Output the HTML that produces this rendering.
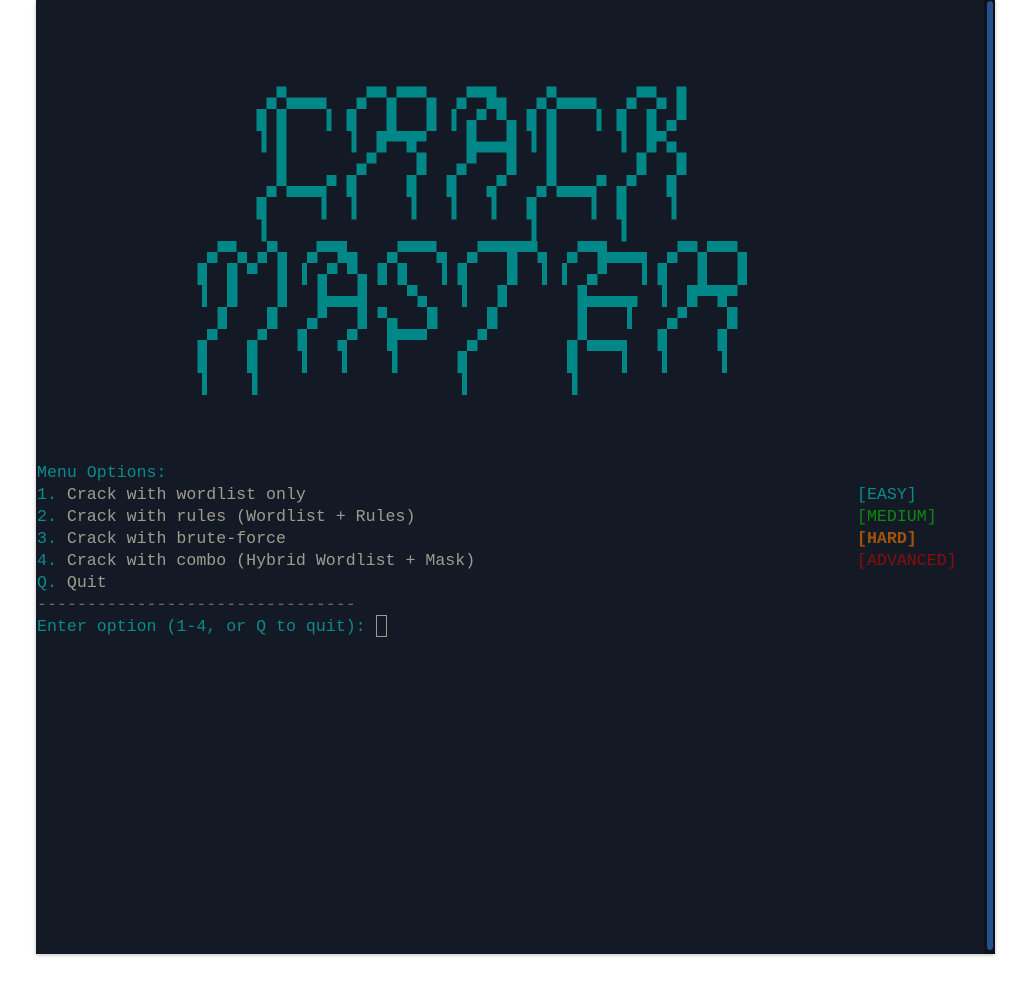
<!DOCTYPE html>
<html><head><meta charset="utf-8">
<style>
html,body{margin:0;padding:0;background:#fff;width:1032px;height:990px;overflow:hidden}
#term{position:absolute;left:36px;top:0;width:959px;height:954px;background:#131a25;box-shadow:0 1px 4px rgba(0,0,0,.25)}
#sbtrack{position:absolute;left:984px;top:0;width:11px;height:954px;background:#0e131b}
#sb{position:absolute;left:987px;top:1px;width:6px;height:949px;background:#24508c;border-radius:3px}
svg{position:absolute;overflow:visible}
svg rect{fill:#008787}
.t{position:absolute;left:37px;font-family:"Liberation Mono","DejaVu Sans Mono",monospace;font-size:16.6px;line-height:22px;white-space:pre;color:#9c9c8e}
.c{color:#0b8a8a}
.tag{position:absolute;left:857px;font-family:"Liberation Mono",monospace;font-size:16.6px;line-height:22px;white-space:pre}
#cur{position:absolute;left:376px;top:615px;width:11px;height:22px;border:1px solid #9c9c8e;box-sizing:border-box}
</style></head><body>
<div id="term"></div>
<div id="sbtrack"></div>
<div id="sb"></div>

<svg style="left:250px;top:80px" width="450" height="170" viewBox="0 0 1350 510" preserveAspectRatio="none" shape-rendering="crispEdges">
<rect x="80" y="20" width="30" height="33"/><rect x="50" y="53" width="30" height="34"/><rect x="110" y="53" width="120" height="34"/>
<rect x="20" y="87" width="30" height="66"/><rect x="35" y="153" width="15" height="65"/><rect x="80" y="87" width="30" height="231"/>
<rect x="230" y="87" width="15" height="66"/><rect x="230" y="285" width="30" height="33"/><rect x="50" y="318" width="30" height="33"/>
<rect x="110" y="318" width="120" height="33"/><rect x="20" y="351" width="30" height="67"/><rect x="35" y="418" width="15" height="67"/>
<rect x="215" y="351" width="15" height="67"/>
<rect x="350" y="20" width="60" height="33"/><rect x="440" y="20" width="90" height="33"/><rect x="320" y="53" width="30" height="34"/>
<rect x="410" y="53" width="30" height="100"/><rect x="530" y="53" width="30" height="100"/><rect x="290" y="87" width="30" height="66"/>
<rect x="305" y="153" width="15" height="65"/><rect x="380" y="153" width="150" height="32"/><rect x="380" y="185" width="30" height="33"/>
<rect x="470" y="185" width="30" height="33"/><rect x="350" y="218" width="30" height="33"/><rect x="500" y="218" width="30" height="67"/>
<rect x="320" y="251" width="30" height="34"/><rect x="290" y="285" width="30" height="66"/><rect x="305" y="351" width="15" height="67"/>
<rect x="470" y="285" width="30" height="66"/><rect x="485" y="351" width="15" height="67"/>
<rect x="650" y="20" width="90" height="33"/><rect x="620" y="53" width="30" height="34"/><rect x="710" y="53" width="60" height="34"/>
<rect x="605" y="87" width="15" height="66"/><rect x="680" y="87" width="30" height="33"/><rect x="740" y="87" width="30" height="33"/>
<rect x="650" y="120" width="30" height="131"/><rect x="770" y="120" width="30" height="165"/><rect x="680" y="185" width="90" height="33"/>
<rect x="620" y="251" width="30" height="34"/><rect x="590" y="285" width="30" height="66"/><rect x="605" y="351" width="15" height="67"/>
<rect x="740" y="285" width="30" height="33"/><rect x="710" y="318" width="30" height="33"/><rect x="725" y="351" width="15" height="67"/>
<rect x="890" y="20" width="30" height="33"/><rect x="860" y="53" width="30" height="34"/><rect x="920" y="53" width="120" height="34"/>
<rect x="830" y="87" width="30" height="66"/><rect x="845" y="153" width="15" height="65"/><rect x="890" y="87" width="30" height="231"/>
<rect x="1040" y="87" width="15" height="66"/><rect x="1040" y="285" width="30" height="33"/><rect x="860" y="318" width="30" height="33"/>
<rect x="920" y="318" width="120" height="33"/><rect x="830" y="351" width="30" height="67"/><rect x="845" y="418" width="15" height="67"/>
<rect x="1025" y="351" width="15" height="67"/>
<rect x="1160" y="20" width="60" height="33"/><rect x="1280" y="20" width="30" height="100"/><rect x="1130" y="53" width="30" height="34"/>
<rect x="1220" y="53" width="30" height="34"/><rect x="1100" y="87" width="30" height="66"/><rect x="1115" y="153" width="15" height="65"/>
<rect x="1190" y="87" width="30" height="131"/><rect x="1250" y="120" width="30" height="33"/><rect x="1220" y="153" width="30" height="32"/>
<rect x="1250" y="185" width="30" height="33"/><rect x="1280" y="218" width="30" height="67"/><rect x="1160" y="218" width="30" height="67"/>
<rect x="1130" y="285" width="30" height="33"/><rect x="1100" y="318" width="30" height="100"/><rect x="1115" y="418" width="15" height="67"/>
<rect x="1250" y="285" width="30" height="66"/><rect x="1265" y="351" width="15" height="67"/>
</svg>

<svg style="left:190px;top:230px" width="570" height="170" viewBox="0 0 1567.5 510" preserveAspectRatio="none" shape-rendering="crispEdges">
<rect x="75" y="33" width="53" height="33"/><rect x="212" y="33" width="28" height="33"/><rect x="47" y="66" width="28" height="33"/>
<rect x="130" y="66" width="27" height="33"/><rect x="185" y="66" width="27" height="33"/><rect x="240" y="66" width="27" height="165"/>
<rect x="20" y="99" width="27" height="66"/><rect x="33" y="165" width="14" height="66"/><rect x="102" y="99" width="28" height="132"/>
<rect x="157" y="99" width="28" height="33"/><rect x="75" y="231" width="27" height="66"/><rect x="212" y="231" width="28" height="66"/>
<rect x="47" y="297" width="28" height="33"/><rect x="185" y="297" width="27" height="33"/><rect x="20" y="330" width="27" height="99"/>
<rect x="33" y="429" width="14" height="66"/><rect x="157" y="330" width="28" height="99"/><rect x="171" y="429" width="14" height="66"/>
<rect x="348" y="33" width="84" height="33"/><rect x="322" y="66" width="28" height="33"/><rect x="405" y="66" width="55" height="33"/>
<rect x="308" y="99" width="14" height="66"/><rect x="377" y="99" width="28" height="33"/><rect x="432" y="99" width="28" height="33"/>
<rect x="350" y="132" width="27" height="132"/><rect x="460" y="132" width="27" height="165"/><rect x="377" y="198" width="83" height="33"/>
<rect x="322" y="264" width="28" height="33"/><rect x="295" y="297" width="27" height="66"/><rect x="308" y="363" width="14" height="66"/>
<rect x="432" y="297" width="28" height="33"/><rect x="405" y="330" width="27" height="33"/><rect x="418" y="363" width="14" height="66"/>
<rect x="570" y="33" width="108" height="33"/><rect x="542" y="66" width="28" height="33"/><rect x="678" y="66" width="29" height="33"/>
<rect x="515" y="99" width="27" height="66"/><rect x="570" y="99" width="27" height="66"/><rect x="693" y="99" width="14" height="66"/>
<rect x="597" y="165" width="28" height="33"/><rect x="625" y="198" width="27" height="33"/><rect x="652" y="231" width="28" height="66"/>
<rect x="515" y="231" width="27" height="33"/><rect x="542" y="264" width="28" height="99"/><rect x="570" y="297" width="82" height="33"/>
<rect x="556" y="363" width="14" height="66"/>
<rect x="790" y="33" width="165" height="33"/><rect x="762" y="66" width="28" height="33"/><rect x="872" y="66" width="28" height="99"/>
<rect x="955" y="66" width="27" height="33"/><rect x="968" y="99" width="14" height="66"/><rect x="735" y="99" width="27" height="66"/>
<rect x="748" y="165" width="14" height="66"/><rect x="845" y="165" width="27" height="66"/><rect x="817" y="231" width="28" height="66"/>
<rect x="790" y="297" width="27" height="33"/><rect x="762" y="330" width="28" height="33"/><rect x="735" y="363" width="27" height="66"/>
<rect x="748" y="429" width="14" height="66"/>
<rect x="1065" y="33" width="82" height="33"/><rect x="1037" y="66" width="28" height="33"/><rect x="1120" y="66" width="137" height="33"/>
<rect x="1023" y="99" width="14" height="66"/><rect x="1120" y="99" width="27" height="33"/><rect x="1243" y="99" width="14" height="66"/>
<rect x="1092" y="132" width="28" height="33"/><rect x="1065" y="165" width="27" height="165"/><rect x="1092" y="198" width="138" height="33"/>
<rect x="1202" y="231" width="14" height="66"/><rect x="1037" y="330" width="28" height="99"/><rect x="1051" y="429" width="14" height="66"/>
<rect x="1092" y="330" width="110" height="33"/><rect x="1188" y="363" width="14" height="66"/>
<rect x="1340" y="33" width="55" height="33"/><rect x="1422" y="33" width="83" height="33"/><rect x="1312" y="66" width="28" height="33"/>
<rect x="1395" y="66" width="27" height="99"/><rect x="1505" y="66" width="27" height="99"/><rect x="1285" y="99" width="27" height="66"/>
<rect x="1298" y="165" width="14" height="66"/><rect x="1367" y="165" width="138" height="33"/><rect x="1367" y="198" width="28" height="33"/>
<rect x="1450" y="198" width="27" height="33"/><rect x="1340" y="231" width="27" height="33"/><rect x="1477" y="231" width="28" height="66"/>
<rect x="1312" y="264" width="28" height="33"/><rect x="1285" y="297" width="27" height="66"/><rect x="1298" y="363" width="14" height="66"/>
<rect x="1450" y="297" width="27" height="66"/><rect x="1463" y="363" width="14" height="66"/>
</svg>

<div class="t c" style="top:462px">Menu Options:</div>
<div class="t" style="top:484px"><span class="c">1.</span> Crack with wordlist only</div>
<div class="t" style="top:506px"><span class="c">2.</span> Crack with rules (Wordlist + Rules)</div>
<div class="t" style="top:528px"><span class="c">3.</span> Crack with brute-force</div>
<div class="t" style="top:550px"><span class="c">4.</span> Crack with combo (Hybrid Wordlist + Mask)</div>
<div class="t" style="top:572px"><span class="c">Q.</span> Quit</div>
<div class="t" style="top:594px;color:#6a6a62">--------------------------------</div>
<div class="t c" style="top:616px">Enter option (1-4, or Q to quit): </div>
<div id="cur"></div>

<div class="tag" style="top:484px;color:#0b8a8a">[EASY]</div>
<div class="tag" style="top:506px;color:#0d8a0d">[MEDIUM]</div>
<div class="tag" style="top:528px;color:#a3520c;font-weight:bold">[HARD]</div>
<div class="tag" style="top:550px;color:#8a0c0c">[ADVANCED]</div>
</body></html>
